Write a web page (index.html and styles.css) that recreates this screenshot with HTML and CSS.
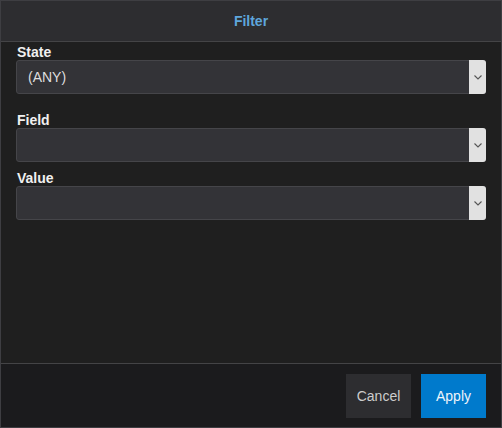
FILE: index.html
```html
<!DOCTYPE html>
<html>
<head>
<meta charset="utf-8">
<link rel="stylesheet" href="styles.css">
</head>
<body>
<div class="dialog">
  <div class="header">Filter</div>
  <div class="content">
    <div class="field field-state">
      <div class="label">State</div>
      <div class="select">
        <span class="value">(ANY)</span>
        <span class="arrow"><svg width="8" height="5" viewBox="0 0 8 5"><path d="M0.5 0.5 L4 4 L7.5 0.5" fill="none" stroke="#555" stroke-width="1.1"/></svg></span>
      </div>
    </div>
    <div class="field">
      <div class="label">Field</div>
      <div class="select">
        <span class="value"></span>
        <span class="arrow"><svg width="8" height="5" viewBox="0 0 8 5"><path d="M0.5 0.5 L4 4 L7.5 0.5" fill="none" stroke="#555" stroke-width="1.1"/></svg></span>
      </div>
    </div>
    <div class="field">
      <div class="label">Value</div>
      <div class="select">
        <span class="value"></span>
        <span class="arrow"><svg width="8" height="5" viewBox="0 0 8 5"><path d="M0.5 0.5 L4 4 L7.5 0.5" fill="none" stroke="#555" stroke-width="1.1"/></svg></span>
      </div>
    </div>
  </div>
  <div class="footer">
    <button class="btn btn-cancel">Cancel</button>
    <button class="btn btn-apply">Apply</button>
  </div>
</div>
</body>
</html>
```
FILE: styles.css
```css
html, body {
  margin: 0;
  padding: 0;
  background: #1e1e1e;
}
.dialog {
  box-sizing: border-box;
  width: 502px;
  height: 428px;
  border: 1px solid #3e3e42;
  display: flex;
  flex-direction: column;
  font-family: "Liberation Sans", Arial, sans-serif;
  background: #1f1f1f;
}
.header {
  height: 40px;
  flex: none;
  border-bottom: 1px solid #444446;
  background: #2d2d30;
  color: #5ea6dc;
  font-weight: bold;
  font-size: 14px;
  display: flex;
  align-items: center;
  justify-content: center;
}
.content {
  flex: 1;
  padding: 2px 15px 0 15px;
}
.field {
  margin-bottom: 8px;
}
.field-state {
  margin-bottom: 18px;
}
.label {
  color: #f0f0f0;
  font-weight: bold;
  font-size: 14px;
  line-height: 16px;
  padding-left: 1px;
}
.select {
  position: relative;
  box-sizing: border-box;
  height: 34px;
  border: 1px solid #454549;
  border-radius: 3px;
  background: #333337;
  display: flex;
  align-items: center;
}
.value {
  padding-left: 11px;
  color: #dedede;
  font-size: 14px;
}
.arrow {
  position: absolute;
  right: -1px;
  top: -1px;
  bottom: -1px;
  width: 17px;
  background: #e1e1e1;
  border-radius: 0 3px 3px 0;
  display: flex;
  align-items: center;
  justify-content: center;
}
.arrow svg {
  display: block;
}
.footer {
  box-sizing: border-box;
  flex: none;
  height: 64px;
  border-top: 1px solid #444446;
  background: #1b1b1d;
  display: flex;
  justify-content: flex-end;
  align-items: flex-start;
  gap: 10px;
  padding: 10px 15px 0 0;
}
.btn {
  width: 65px;
  height: 44px;
  border: none;
  font-family: "Liberation Sans", Arial, sans-serif;
  font-size: 14px;
  padding: 0;
}
.btn-cancel {
  background: #2d2d30;
  color: #cccccc;
}
.btn-apply {
  background: #007acc;
  color: #eef4fa;
}
```
